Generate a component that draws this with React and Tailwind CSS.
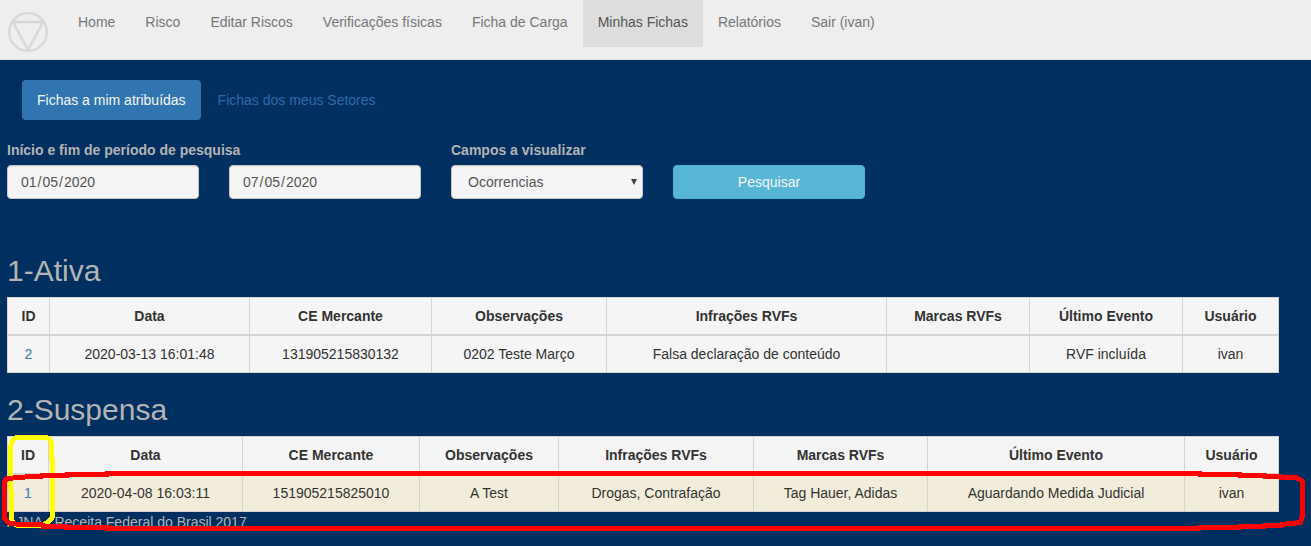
const navItems = [
  'Home',
  'Risco',
  'Editar Riscos',
  'Verificações físicas',
  'Ficha de Carga',
  'Minhas Fichas',
  'Relatórios',
  'Sair (ivan)',
];

const headers = ['ID', 'Data', 'CE Mercante', 'Observações', 'Infrações RVFs', 'Marcas RVFs', 'Último Evento', 'Usuário'];

const sections = [
  {
    title: '1-Ativa',
    widths: [42, 200, 182, 175, 280, 143, 153, 96],
    rowClass: 'bg-[#f5f5f5]',
    row: ['2', '2020-03-13 16:01:48', '131905215830132', '0202 Teste Março', 'Falsa declaração de conteúdo', '', 'RVF incluída', 'ivan'],
  },
  {
    title: '2-Suspensa',
    widths: [41, 194, 177, 139, 195, 174, 257, 94],
    rowClass: 'bg-[#f2edda]',
    row: ['1', '2020-04-08 16:03:11', '151905215825010', 'A Test', 'Drogas, Contrafação', 'Tag Hauer, Adidas', 'Aguardando Medida Judicial', 'ivan'],
  },
];

function Logo() {
  return (
    <svg className="mt-3 ml-2 h-10 w-10 shrink-0" viewBox="0 0 40 40" fill="none" stroke="#d8d8d8" strokeWidth="2.3">
      <circle cx="20" cy="20" r="18.8" />
      <path d="M5 10H35L20 38Z" />
    </svg>
  );
}

function Navbar() {
  return (
    <nav className="flex h-[60px] border-b border-[#e0e0e0] bg-[#eeeeee]">
      <Logo />
      <ul className="ml-[15px] flex">
        {navItems.map((item) => (
          <li
            key={item}
            className={
              item === 'Minhas Fichas'
                ? 'h-[47px] bg-[#dddddd] px-[15px] pt-3 text-[#555555]'
                : 'h-[47px] px-[15px] pt-3 text-[#777777]'
            }
          >
            {item}
          </li>
        ))}
      </ul>
    </nav>
  );
}

function DateField({ value }) {
  return (
    <div className="h-[34px] w-48 rounded border border-[#c8c8c8] bg-[#f5f5f5] px-[13px] py-1.5 text-[#555555] shadow-[inset_0_1px_1px_rgba(0,0,0,0.075)]">
      {value.split('/').map((part, i) => (
        <span key={i}>
          {i > 0 && <span className="px-px">/</span>}
          {part}
        </span>
      ))}
    </div>
  );
}

function SearchForm() {
  return (
    <form className="mt-5 flex items-end gap-[30px]">
      <div>
        <div className="mb-[5px] font-bold">Início e fim de período de pesquisa</div>
        <div className="flex gap-[30px]">
          <DateField value="01/05/2020" />
          <DateField value="07/05/2020" />
        </div>
      </div>
      <div>
        <div className="mb-[5px] font-bold">Campos a visualizar</div>
        <div className="flex h-[34px] w-48 items-center justify-between rounded border border-[#c8c8c8] bg-[#f5f5f5] pr-[5px] pl-4 text-[#555555] shadow-[inset_0_1px_1px_rgba(0,0,0,0.075)]">
          Ocorrencias
          <svg className="h-[6px] w-[6px]" viewBox="0 0 6 6" fill="#444444">
            <path d="M0 0H6L3 6Z" />
          </svg>
        </div>
      </div>
      <button type="button" className="h-[34px] w-48 rounded border border-[#4bb2d0] bg-[#57b6d6] text-[#f5f5f5]">
        Pesquisar
      </button>
    </form>
  );
}

function Section({ title, widths, row, rowClass }) {
  return (
    <section className="mb-5 last:mb-0">
      <h2 className="mb-2.5 text-[30px] leading-[33px]">{title}</h2>
      <table className="w-[1272px] table-fixed border-separate border-spacing-0 border-r border-[#d4d4d4] text-center text-[#333333]">
        <colgroup>
          {widths.map((w, i) => (
            <col key={i} style={{ width: w }} />
          ))}
        </colgroup>
        <thead>
          <tr className="bg-[#f5f5f5]">
            {headers.map((h) => (
              <th key={h} className="h-[39px] border-t border-b-2 border-l border-[#d4d4d4] p-0 font-bold">
                {h}
              </th>
            ))}
          </tr>
        </thead>
        <tbody>
          <tr className={rowClass}>
            {row.map((cell, i) => (
              <td
                key={i}
                className={
                  i === 0
                    ? 'h-[37px] border-b border-l border-[#d4d4d4] p-0 text-[#337ab7]'
                    : 'h-[37px] border-b border-l border-[#d4d4d4] p-0'
                }
              >
                {cell}
              </td>
            ))}
          </tr>
        </tbody>
      </table>
    </section>
  );
}

function Markers() {
  return (
    <svg
      className="pointer-events-none absolute top-0 left-0 h-[546px] w-[1311px]"
      viewBox="0 0 1311 546"
      fill="none"
      strokeWidth="5"
      strokeLinejoin="round"
      shapeRendering="crispEdges"
    >
      <path stroke="#ffff00" d="M10.5 447L12 441L16 437.5H47L51 441V457L52.5 460V517L48 522L43 525H16L11 520V490L10.5 485Z" />
      <path
        stroke="#ff0000"
        d="M4.5 481L7 478.5L25 477L42 476.5V475.5H67V474.5H107V473.5H1200V474.5H1240V475.5H1265V476.5H1281V477.5H1296L1302.5 481V516L1300.5 522.5L1281 524.5V525.5H1264V526.5H1240V527.5H1199V528.5H108V527.5H66V526.5H43V525L16 524L9 523L4.5 519Z"
      />
    </svg>
  );
}

export default function App() {
  return (
    <div className="relative h-[546px] w-[1311px] overflow-hidden bg-[#003060] font-['Liberation_Sans',Arial,sans-serif] text-sm leading-5 text-[#b4b4b4]">
      <Navbar />
      <main className="px-[7px] pt-5">
        <div className="ml-[15px] flex gap-0.5">
          <div className="h-10 rounded bg-[#3175b0] px-[15px] py-2.5 text-[#f5f5f5]">Fichas a mim atribuídas</div>
          <div className="h-10 px-[15px] py-2.5 text-[#2b6ca8]">Fichas dos meus Setores</div>
        </div>
        <SearchForm />
        <div className="mt-[55px]">
          {sections.map((s) => (
            <Section key={s.title} {...s} />
          ))}
        </div>
        <footer>AJNA - Receita Federal do Brasil 2017</footer>
      </main>
      <Markers />
    </div>
  );
}
